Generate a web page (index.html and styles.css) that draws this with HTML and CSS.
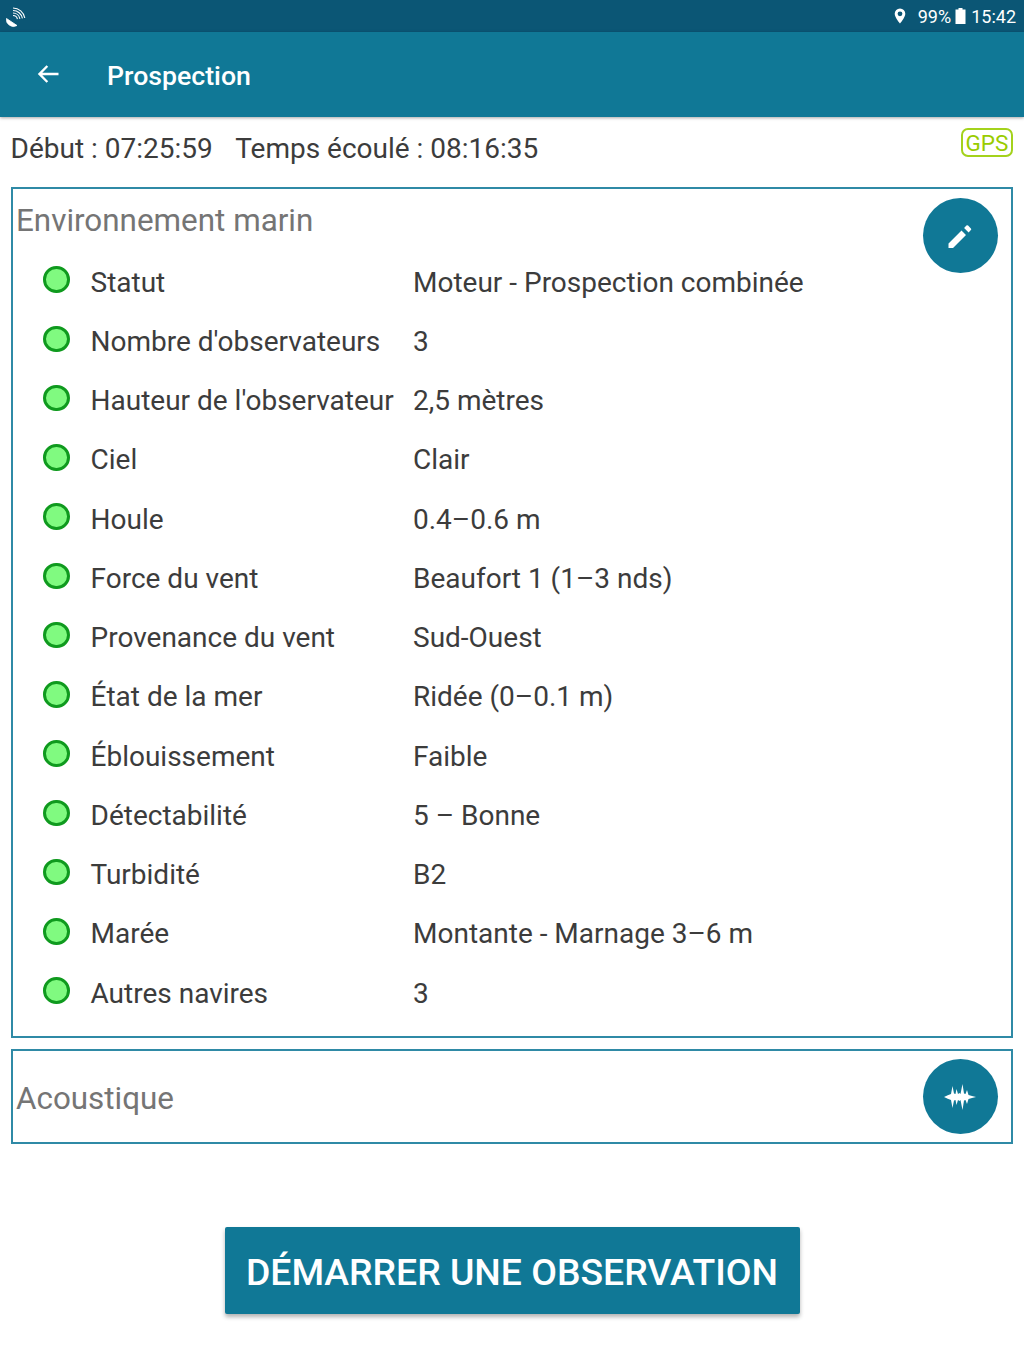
FILE: index.html
```html
<!DOCTYPE html>
<html lang="fr">
<head>
<meta charset="utf-8">
<title>Prospection</title>
<link rel="stylesheet" href="styles.css">
</head>
<body>
<div class="status">
  <svg class="sat" width="22" height="22" viewBox="0 0 22 22" fill="none" stroke="#fff" stroke-width="1.100"><path d="M1.500 12.500 A7 7 0 0 0 12 19.500 Z" fill="#fff" stroke-width=".8"/><path d="M8 9.500 A4.500 4.500 0 0 1 12.400 13.200"/><path d="M8 7 A7 7 0 0 1 14.900 12.800"/><path d="M8 4.500 A9.500 9.500 0 0 1 17.400 12.400"/><path d="M8 2 A12 12 0 0 1 19.800 12"/></svg>
  <div class="status-right">
    <svg class="pin" width="14" height="16" viewBox="0 0 14 16"><path fill="#fff" fill-rule="evenodd" d="M7 0.500a5.300 5.300 0 0 0-5.300 5.300C1.700 9.600 7 15.500 7 15.500s5.300-5.900 5.300-9.700A5.300 5.300 0 0 0 7 0.500zM7 3.400a2.400 2.400 0 1 1 0 4.800 2.400 2.400 0 0 1 0-4.800z"/></svg>
    <span class="pct">99%</span>
    <svg class="batt" width="11" height="16" viewBox="0 0 11 16"><path fill="#fff" d="M3.500 0h4v1.500H10.500V16H.5V1.500H3.500z"/></svg>
    <span class="time">15:42</span>
  </div>
</div>
<header class="appbar">
  <svg class="back" width="24" height="24" viewBox="0 0 24 24"><path fill="#fff" d="M22.500 10.700H6.300l5.900-5.900L10.500 3.300 1.800 12l8.700 8.700 1.700-1.500-5.900-5.900h16.200z"/></svg>
  <h1 class="title">Prospection</h1>
</header>
<main class="content">
  <div class="info">
    <span class="info-start">Début : 07:25:59</span>
    <span class="info-elapsed">Temps écoulé : 08:16:35</span>
    <span class="gps">GPS</span>
  </div>
  <section class="panel panel-env">
    <h2 class="panel-title">Environnement marin</h2>
    <button class="fab fab-top" aria-label="Modifier">
      <svg class="pencil" width="28" height="28" viewBox="0 0 28 28"><path fill="#fff" d="M2.500 21.500V26h4.500L20 13l-4.500-4.500zM22.600 10.400l-4.500-4.500 2.300-2.300a1.200 1.200 0 0 1 1.700 0l2.800 2.800a1.200 1.200 0 0 1 0 1.700z"/></svg>
    </button>
    <ul class="rows">
      <li class="row"><i class="dot"></i><span class="label">Statut</span><span class="value">Moteur - Prospection combinée</span></li>
      <li class="row"><i class="dot"></i><span class="label">Nombre d'observateurs</span><span class="value">3</span></li>
      <li class="row"><i class="dot"></i><span class="label">Hauteur de l'observateur</span><span class="value">2,5 mètres</span></li>
      <li class="row"><i class="dot"></i><span class="label">Ciel</span><span class="value">Clair</span></li>
      <li class="row"><i class="dot"></i><span class="label">Houle</span><span class="value">0.4–0.6 m</span></li>
      <li class="row"><i class="dot"></i><span class="label">Force du vent</span><span class="value">Beaufort 1 (1–3 nds)</span></li>
      <li class="row"><i class="dot"></i><span class="label">Provenance du vent</span><span class="value">Sud-Ouest</span></li>
      <li class="row"><i class="dot"></i><span class="label">État de la mer</span><span class="value">Ridée (0–0.1 m)</span></li>
      <li class="row"><i class="dot"></i><span class="label">Éblouissement</span><span class="value">Faible</span></li>
      <li class="row"><i class="dot"></i><span class="label">Détectabilité</span><span class="value">5 – Bonne</span></li>
      <li class="row"><i class="dot"></i><span class="label">Turbidité</span><span class="value">B2</span></li>
      <li class="row"><i class="dot"></i><span class="label">Marée</span><span class="value">Montante - Marnage 3–6 m</span></li>
      <li class="row"><i class="dot"></i><span class="label">Autres navires</span><span class="value">3</span></li>
    </ul>
  </section>
  <section class="panel panel-acoustic">
    <h2 class="panel-title">Acoustique</h2>
    <button class="fab fab-mid" aria-label="Acoustique">
      <svg width="34" height="34" viewBox="0 0 34 34"><path fill="#fff" d="M1 17 Q5 15 8 14 L9.500 6 11 13.500 12.500 14 13.500 9 15 14 16.500 13 17.500 14 19.500 4 21 13.500 22.500 14 24 10 25.500 15 29 16 33 17 29 18 25.500 19 24 24 22.500 20 21 20.500 19.500 30 17.500 20 16.500 21 15 20 13.500 25 12.500 20 11 20.500 9.500 28 8 20 Q5 19 1 17z"/></svg>
    </button>
  </section>
  <div class="actions">
    <button class="cta">DÉMARRER UNE OBSERVATION</button>
  </div>
</main>
</body>
</html>
```

FILE: styles.css
```css
* { box-sizing: border-box; }
html, body { margin: 0; padding: 0; }
body {
  width: 1024px;
  height: 1365px;
  overflow: hidden;
  background: #fff;
  font-family: Roboto, "Liberation Sans", sans-serif;
  color: #3c3c3c;
}
.status {
  height: 32px;
  background: #0b5675;
  display: flex;
  align-items: center;
  justify-content: space-between;
  padding: 0 8px 0 5px;
  color: #fff;
}
.sat { display: block; margin-top: 2px; }
.status-right { display: flex; align-items: center; font-size: 18px; }
.pin { margin-right: 11px; margin-left: 1px; }
.pct { margin-right: 4px; font-size: 18px; }
.batt { margin-right: 5px; }
.appbar {
  height: 85px;
  background: #107896;
  display: flex;
  align-items: center;
  padding: 2px 0 0 36px;
  box-shadow: 0 1px 3px rgba(0, 0, 0, .35);
  position: relative;
}
.back { display: block; margin-bottom: 4px; }
.title {
  margin: 0 0 0 47px;
  color: #fff;
  font-size: 26.700px;
  font-weight: 500;
  line-height: 32px;
}
.content { padding: 0 11px; }
.info {
  height: 70px;
  display: flex;
  align-items: flex-start;
  font-size: 28px;
  line-height: 34px;
  padding-top: 15px;
}
.info-start { margin-left: -0.500px; }
.info-elapsed { margin-left: 22.500px; }
.gps {
  margin-left: auto;
  margin-top: -4px;
  width: 52px;
  height: 29px;
  border: 2px solid #a4d21c;
  border-radius: 7px;
  color: #99cc00;
  font-size: 22.500px;
  line-height: 26px;
  text-align: center;
}
.panel {
  border: 2px solid #2f8aa6;
  position: relative;
}
.panel-env { height: 851px; }
.panel-acoustic {
  height: 95px;
  margin-top: 11px;
  display: flex;
  align-items: center;
}
.panel-title {
  margin: 0;
  padding-left: 3px;
  font-size: 31.400px;
  font-weight: 400;
  line-height: 38px;
  color: #757575;
}
.panel-env .panel-title { padding-top: 13px; }
.panel-acoustic .panel-title { padding-top: 5px; }
.fab {
  position: absolute;
  right: 13.500px;
  width: 75px;
  height: 75px;
  border: 0;
  border-radius: 50%;
  background: #107896;
  padding: 0;
  display: flex;
  align-items: center;
  justify-content: center;
}
.fab-top { top: 9px; }
.fab-mid { top: 8px; }
.pencil { display: block; }
.rows {
  list-style: none;
  margin: 0;
  padding: 11px 0 0 30px;
}
.row {
  height: 59.250px;
  display: flex;
  align-items: center;
  font-size: 28px;
}
.dot {
  flex: none;
  width: 26.500px;
  height: 26.500px;
  margin-bottom: 2px;
  border-radius: 50%;
  background: #80fa80;
  border: 3px solid #0f9a1e;
}
.label { flex: none; width: 322.500px; margin-left: 21px; padding-top: 3px; }
.value { flex: 1; padding-top: 3px; }
.actions {
  display: flex;
  justify-content: center;
  margin-top: 83px;
}
.cta {
  width: 575px;
  height: 87px;
  border: 0;
  border-radius: 2px;
  background: #107896;
  color: #fff;
  font-family: inherit;
  font-size: 37.350px;
  font-weight: 500;
  padding: 3px 0 0;
  box-shadow: 0 3px 4px rgba(0, 0, 0, .3);
}
```
